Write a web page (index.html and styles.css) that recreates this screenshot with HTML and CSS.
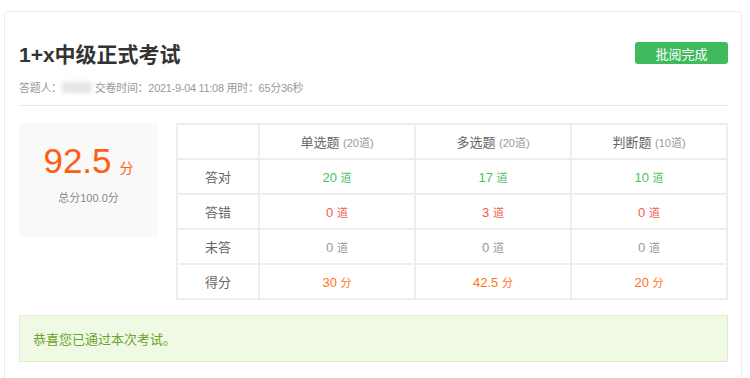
FILE: index.html
```html
<!DOCTYPE html>
<html lang="zh-CN">

<head>
    <meta charset="UTF-8">
    <meta name="viewport" content="width=device-width, initial-scale=1.0">
    <title>考试结果</title>

    <link rel="stylesheet" href="styles.css">

</head>

<body>
    <div class="card">
        <div class="header">
            <h1>1+x中级正式考试</h1>
            <button class="done-btn">批阅完成</button>
        </div>
        <div class="meta">
            答题人：<span class="name-blur"></span>交卷时间：2021-9-04 11:08 用时：65分36秒
        </div>

        <div class="summary">
            <div class="score-box">
                <div class="score"><span class="score-num">92.5</span><span class="score-unit">分</span></div>
                <div class="total">总分100.0分</div>
            </div>

            <table class="result-table">
                <tr>
                    <th class="label-col"></th>
                    <th>单选题 <small>(20道)</small></th>
                    <th>多选题 <small>(20道)</small></th>
                    <th>判断题 <small>(10道)</small></th>
                </tr>
                <tr>
                    <td>答对</td>
                    <td class="green">20 <small>道</small></td>
                    <td class="green">17 <small>道</small></td>
                    <td class="green">10 <small>道</small></td>
                </tr>
                <tr>
                    <td>答错</td>
                    <td class="red">0 <small>道</small></td>
                    <td class="red">3 <small>道</small></td>
                    <td class="red">0 <small>道</small></td>
                </tr>
                <tr>
                    <td>未答</td>
                    <td class="gray">0 <small>道</small></td>
                    <td class="gray">0 <small>道</small></td>
                    <td class="gray">0 <small>道</small></td>
                </tr>
                <tr>
                    <td>得分</td>
                    <td class="orange">30 <small>分</small></td>
                    <td class="orange">42.5 <small>分</small></td>
                    <td class="orange">20 <small>分</small></td>
                </tr>
            </table>
        </div>

        <div class="alert">恭喜您已通过本次考试。</div>
    </div>
</body>
</html>
```

FILE: styles.css
```css
body {
    margin: 0;
    font-family: 'Liberation Sans', 'Noto Sans CJK SC', sans-serif;
    background-color: #fff;
    color: #333;
}

.card {
    margin: 11px 8px 0 4px;
    padding: 26px 13px 40px 14px;
    border: 1px solid #e8edf3;
    border-radius: 4px;
    box-sizing: border-box;
    height: 420px;
}

.header {
    display: flex;
    align-items: center;
    justify-content: space-between;
    height: 30px;
}

h1 {
    margin: 0;
    font-size: 21px;
    font-weight: bold;
    color: #333;
}

.done-btn {
    width: 93px;
    height: 22px;
    padding: 0;
    border: none;
    border-radius: 3px;
    background-color: #3fbb5e;
    color: #fff;
    font-family: inherit;
    font-size: 13px;
}

.meta {
    margin-top: 10px;
    padding-bottom: 7px;
    line-height: 20px;
    font-size: 11px;
    letter-spacing: -0.3px;
    color: #999;
    border-bottom: 1px solid #e5e5e5;
}

.name-blur {
    display: inline-block;
    width: 30px;
    height: 11px;
    margin: 0 3px 0 0;
    vertical-align: -1px;
    background-color: #e6e6e6;
    filter: blur(2px);
}

/* score + table row */
.summary {
    display: flex;
    gap: 18px;
    margin-top: 17px;
    align-items: flex-start;
}

.score-box {
    width: 139px;
    height: 114px;
    flex-shrink: 0;
    background-color: #f9f9f9;
    border-radius: 3px;
    text-align: center;
    padding-top: 16px;
    box-sizing: border-box;
}

.score {
    display: flex;
    justify-content: center;
    align-items: baseline;
    gap: 8px;
    height: 44px;
    line-height: 44px;
    color: #ff5e12;
}

.score-num {
    font-size: 35px;
}

.score-unit {
    font-size: 14px;
}

.total {
    margin-top: 8px;
    font-size: 11px;
    line-height: 14px;
    color: #888;
}

.result-table {
    flex: 1;
    border-collapse: collapse;
    table-layout: fixed;
    font-size: 13px;
    color: #666;
}

.result-table th,
.result-table td {
    border: 2px solid #eee;
    height: 33px;
    padding: 0;
    text-align: center;
    font-weight: normal;
}

.result-table .label-col {
    width: 80px;
}

.result-table small {
    font-size: 11px;
}

.result-table th small {
    color: #999;
}

.green {
    color: #4cc064;
}

.red {
    color: #f25a4f;
}

.gray {
    color: #999;
}

.orange {
    color: #ff7420;
}

.alert {
    margin-top: 15px;
    height: 47px;
    box-sizing: border-box;
    padding-left: 13px;
    display: flex;
    align-items: center;
    background-color: #f0f9e3;
    border: 1px solid #dfeeca;
    color: #6ba32e;
    font-size: 13px;
}
```
